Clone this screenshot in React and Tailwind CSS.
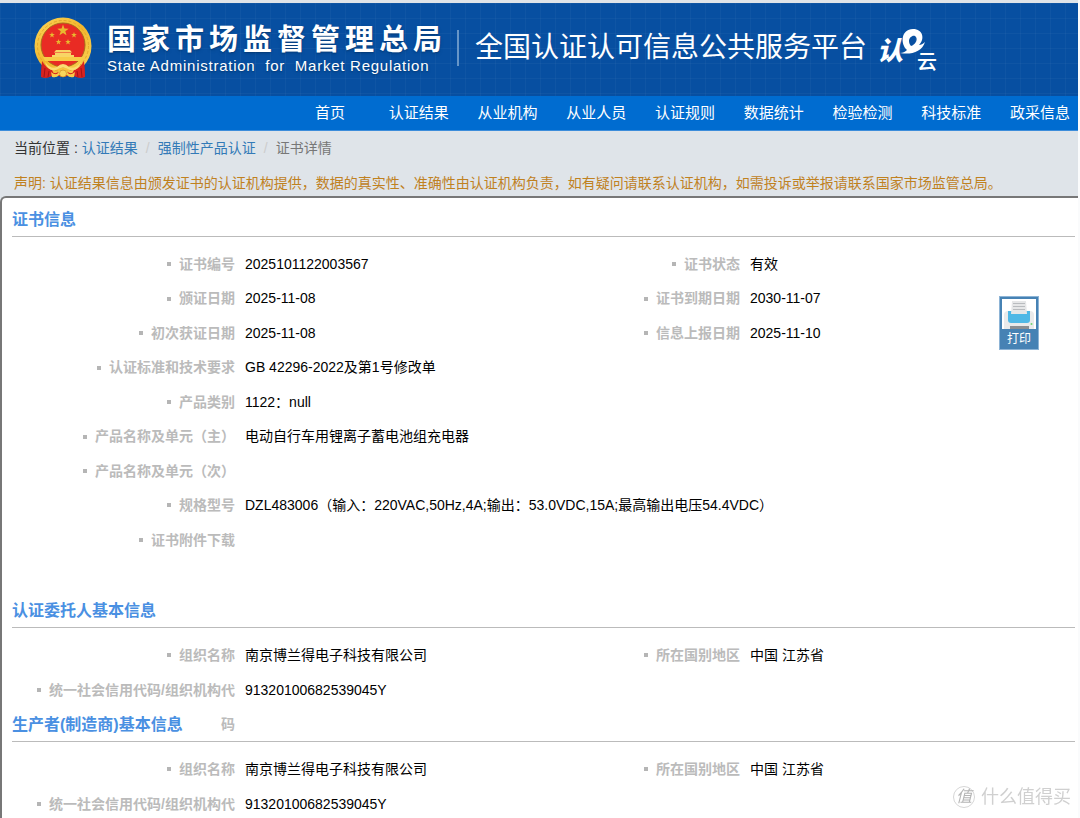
import { useId } from 'react';

const NAV = ['首页', '认证结果', '从业机构', '从业人员', '认证规则', '数据统计', '检验检测', '科技标准', '政采信息'];

const CERT = [
  ['证书编号', '2025101122003567', '证书状态', '有效'],
  ['颁证日期', '2025-11-08', '证书到期日期', '2030-11-07'],
  ['初次获证日期', '2025-11-08', '信息上报日期', '2025-11-10'],
  ['认证标准和技术要求', 'GB 42296-2022及第1号修改单'],
  ['产品类别', '1122：null'],
  ['产品名称及单元（主）', '电动自行车用锂离子蓄电池组充电器'],
  ['产品名称及单元（次）', ''],
  ['规格型号', 'DZL483006（输入：220VAC,50Hz,4A;输出：53.0VDC,15A;最高输出电压54.4VDC）'],
  ['证书附件下载', ''],
];

const ORG = [
  ['组织名称', '南京博兰得电子科技有限公司', '所在国别地区', '中国 江苏省'],
  ['统一社会信用代码/组织机构代码', '91320100682539045Y'],
];

const STAR = 'M0 -1L.24 -.32L.95 -.31L.38 .12L.59 .81L0 .4L-.59 .81L-.38 .12L-.95 -.31L-.24 -.32Z';

function Emblem() {
  const gold = useId();
  return (
    <svg viewBox="0 0 58 62" className="h-[62px] w-[58px] shrink-0" aria-hidden="true">
      <defs>
        <linearGradient id={gold} x1="0" y1="0" x2="1" y2="1">
          <stop offset="0" stopColor="#fbd75a" />
          <stop offset=".5" stopColor="#f3b62c" />
          <stop offset="1" stopColor="#f9d65c" />
        </linearGradient>
      </defs>
      <path d="M8 43L7 60Q13 62 18 59L40 59Q45 62 51 60L50 43Z" fill="#cf1f1c" />
      <circle cx="29" cy="29" r="28.5" fill={`url(#${gold})`} />
      <circle cx="29" cy="29" r="25.5" fill="none" stroke="#e3a62c" strokeWidth="1" strokeDasharray="3 2" />
      <circle cx="29" cy="28" r="22" fill="#e92b24" stroke="#a8691b" strokeWidth="1" />
      <g fill="#e9b82f">
        <path d={STAR} transform="translate(29 13.5) scale(6)" />
        <path d={STAR} transform="translate(18 18) scale(3)" />
        <path d={STAR} transform="translate(40 18) scale(3)" />
        <path d={STAR} transform="translate(24.500 25) scale(3)" />
        <path d={STAR} transform="translate(34 25) scale(3)" />
      </g>
      <path d="M22 33h14l2 2.500h-18zM21 36h16v2h3v3H18v-3h3z" fill="#f8d565" />
      <path d="M9 40h40l-2 4H11z" fill="#f7cb48" />
      <path d="M8 44Q12 51 18 53L20 57L29 53L38 57L40 53Q46 51 50 44L51 60Q44 62 39 58L29 60L19 58Q14 62 7 60Z" fill="#d8231f" />
      <path d="M11 51L10 60M15 54L14 60M47 51L48 60M43 54L44 60" stroke="#a51215" strokeWidth="1" />
      <path d="M11 45Q17 53 23 50Q29 44 35 50Q41 53 47 45Q44 55 36 53Q29 48 22 53Q14 55 11 45Z" fill="#fadd72" />
      <path d="M17 55Q23 60 25 54L33 54Q35 60 41 55L40 60Q35 61 33 58L25 58Q23 61 18 60Z" fill="#f7cb48" />
      <circle cx="29" cy="56.500" r="3.500" fill="#f9d65c" stroke="#c98a1c" strokeWidth=".6" />
    </svg>
  );
}

function CloudLogo() {
  return (
    <div className="relative h-11 w-[60px] shrink-0" role="img" aria-label="认e云">
      <span className="absolute bottom-2 left-0 text-[26px] leading-none font-black italic">认</span>
      <svg viewBox="0 0 60 44" className="absolute inset-0 h-11 w-[60px]" aria-hidden="true">
        <path
          fillRule="evenodd"
          fill="#fff"
          d="M30 22C23 16 24 1 36 1C46 1 48 11 42 17C44 17 46 16 48 14C45 24 34 27 23 25C26 25 28 24 30 22ZM34 18C38 17 41 12 39 9C37 6 32 9 32 13C32 15 33 17 34 18Z"
        />
      </svg>
      <span className="absolute right-0 bottom-0 text-[20px] leading-none font-medium">云</span>
    </div>
  );
}

function Printer() {
  return (
    <svg viewBox="0 0 34 30" className="h-[30px] w-[34px] bg-white" aria-hidden="true">
      <path d="M2 16Q2 12 6 12H28Q32 12 32 16V30H2Z" fill="#e9eaeb" />
      <path d="M6 12H28V21Q28 24 25 24H9Q6 24 6 21Z" fill="#4fb8e6" />
      <path d="M10 2H24L25 15H9Z" fill="#e6e7e8" />
      <path d="M11 4.500H23M11 7.500H23M11 10.500H23" stroke="#b9bcbf" strokeWidth="1" />
      <path d="M8 27H27V30H8Z" fill="#8b8f93" />
      <circle cx="29.500" cy="25" r="1" fill="#72d672" />
    </svg>
  );
}

function Label({ children }) {
  return (
    <dt className="pl-4 text-right font-bold text-[#bbb]">
      <span className="mr-2 mb-[2px] inline-block size-1 bg-[#b5b5b5] align-middle" />
      {children}
    </dt>
  );
}

function Section({ title, rows, className }) {
  return (
    <section>
      <h2 className="h-[34px] w-full border-b border-[#bbb] text-[16px] leading-[34px] font-bold text-[#4a90e2]">{title}</h2>
      <dl className={`mt-[10px] grid auto-rows-fr leading-[34px] ${className}`}>
        {rows.map(([label, value, label2, value2]) => (
          <div key={label} className="grid min-h-0 grid-cols-[223fr_371fr_134fr_335fr]">
            <Label>{label}</Label>
            <dd className={label2 ? 'pl-[10px]' : 'col-span-3 pl-[10px]'}>{value}</dd>
            {label2 && <Label>{label2}</Label>}
            {label2 && <dd className="pl-[10px]">{value2}</dd>}
          </div>
        ))}
      </dl>
    </section>
  );
}

export default function App() {
  return (
    <div className="bg-[#fafbfc] pr-[2px] font-['Liberation_Sans','Noto_Sans_CJK_SC',sans-serif] text-[14px] text-black">
      <div className="min-h-screen bg-[#dfe4e9] pt-[3px]">
        <header className="text-white">
          <div className="flex h-[93px] items-center bg-[#074fa1] bg-[linear-gradient(#ffffff08_1px,transparent_1px),linear-gradient(90deg,#ffffff08_1px,transparent_1px)] bg-[size:15px_15px] pb-[3px] pl-[34px]">
            <Emblem />
            <div className="ml-[15px] pt-1 text-shadow-md">
              <div className="text-[29px] leading-[32px] font-bold tracking-[5px] whitespace-nowrap">国家市场监督管理总局</div>
              <div className="text-[15px] leading-[20px] tracking-wider whitespace-pre">State Administration  for  Market Regulation</div>
            </div>
            <div className="ml-[10px] h-9 w-[2px] bg-[#6796c8]" />
            <h1 className="ml-[16px] text-[28px] leading-[36px] whitespace-nowrap">全国认证认可信息公共服务平台</h1>
            <div className="ml-[10px] pt-1"><CloudLogo /></div>
          </div>
          <nav className="flex h-[35px] justify-end border-b border-[#3d8ddb] bg-[#006cd0] pr-[8px] text-[15px]">
            <div className="flex w-[770px] items-center justify-between">
              {NAV.map((item) => (
                <a key={item} href="#" className="w-[60px] text-center whitespace-nowrap">{item}</a>
              ))}
            </div>
          </nav>
        </header>

        <nav className="flex h-[35px] items-center px-[14px] text-[#333]">
          <span>当前位置 :</span>
          <a href="#" className="ml-1 text-[#337ab7]">认证结果</a>
          <span className="w-5 text-center text-[#ccc]">/</span>
          <a href="#" className="text-[#337ab7]">强制性产品认证</a>
          <span className="w-5 text-center text-[#ccc]">/</span>
          <span className="text-[#777]">证书详情</span>
        </nav>
        <p className="h-[30px] px-[14px] leading-[34px] whitespace-nowrap text-[#c0811f]">
          声明: 认证结果信息由颁发证书的认证机构提供，数据的真实性、准确性由认证机构负责，如有疑问请联系认证机构，如需投诉或举报请联系国家市场监管总局。
        </p>

        <main className="relative rounded-tl-md border-t-2 border-l-2 border-[#777] bg-white pt-[5px] pr-[3px] pl-[10px]">
          <Section title="证书信息" rows={CERT} className="h-[310px]" />
          <div className="h-[37px]" />
          <Section title="认证委托人基本信息" rows={ORG} className="h-[70px]" />
          <Section title="生产者(制造商)基本信息" rows={ORG} className="h-[70px]" />
          <button type="button" className="absolute top-[98px] right-[39px] flex w-10 flex-col items-center border border-[#8db4d6] bg-[#4682b4] pt-[2px] text-[12px] leading-[20px] text-white">
            <Printer />
            打印
          </button>
        </main>
      </div>

      <div className="fixed right-[9px] bottom-[9px] flex items-center gap-[6px] text-[18px] leading-6 text-[#d0d0d0]">
        <span className="flex size-[22px] items-center justify-center rounded-full border border-[#d6d6d6] text-[16px] text-[#b5b5b5] italic">值</span>
        什么值得买
      </div>
    </div>
  );
}
